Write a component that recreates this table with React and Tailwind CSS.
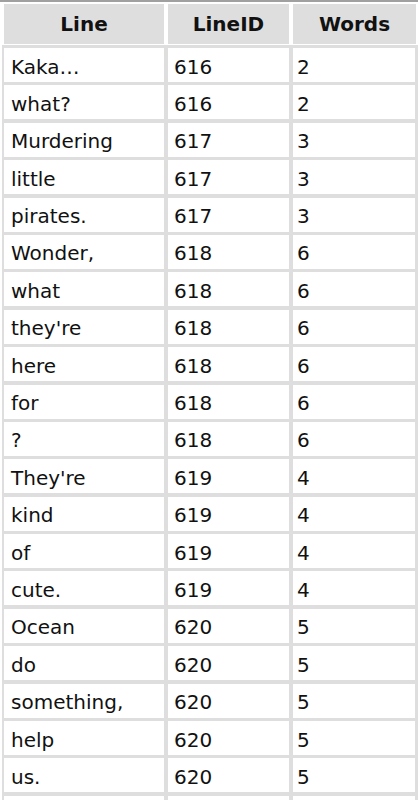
const rows = [
  ['Kaka…', '616', '2'],
  ['what?', '616', '2'],
  ['Murdering', '617', '3'],
  ['little', '617', '3'],
  ['pirates.', '617', '3'],
  ['Wonder,', '618', '6'],
  ['what', '618', '6'],
  ["they're", '618', '6'],
  ['here', '618', '6'],
  ['for', '618', '6'],
  ['?', '618', '6'],
  ["They're", '619', '4'],
  ['kind', '619', '4'],
  ['of', '619', '4'],
  ['cute.', '619', '4'],
  ['Ocean', '620', '5'],
  ['do', '620', '5'],
  ['something,', '620', '5'],
  ['help', '620', '5'],
  ['us.', '620', '5'],
  ['', '', ''],
];

export default function App() {
  return (
    <div
      className="w-[418px] h-[800px] overflow-hidden bg-white text-[#111] text-[20px]"
      style={{ fontFamily: '"DejaVu Sans", "Noto Sans", sans-serif' }}
    >
      <div className="h-[2px] bg-[#a0a0a0]" />
      <div className="flex gap-x-[4px] pl-[4px] pr-[2px] pt-[2px]">
        <div className="w-[160px] h-[40px] bg-[#dedede] flex items-center justify-center font-bold">Line</div>
        <div className="w-[121px] h-[40px] bg-[#dedede] flex items-center justify-center font-bold">LineID</div>
        <div className="flex-1 h-[40px] bg-[#dedede] flex items-center justify-center font-bold">Words</div>
      </div>
      <div className="mt-[1px] ml-[2px] bg-[#dedede] pt-[3px] pl-[2px] pr-[3px] flex flex-col gap-y-[3.4px]">
        {rows.map((r, i) => (
          <div key={i} className="flex gap-x-[4px]">
            <div className="w-[160px] h-[34px] bg-white flex items-center pl-[7px] pt-[3px] leading-none">{r[0]}</div>
            <div className="w-[121px] h-[34px] bg-white flex items-center pl-[6px] pt-[3px] leading-none">{r[1]}</div>
            <div className="flex-1 h-[34px] bg-white flex items-center pl-[4px] pt-[3px] leading-none">{r[2]}</div>
          </div>
        ))}
      </div>
    </div>
  );
}
